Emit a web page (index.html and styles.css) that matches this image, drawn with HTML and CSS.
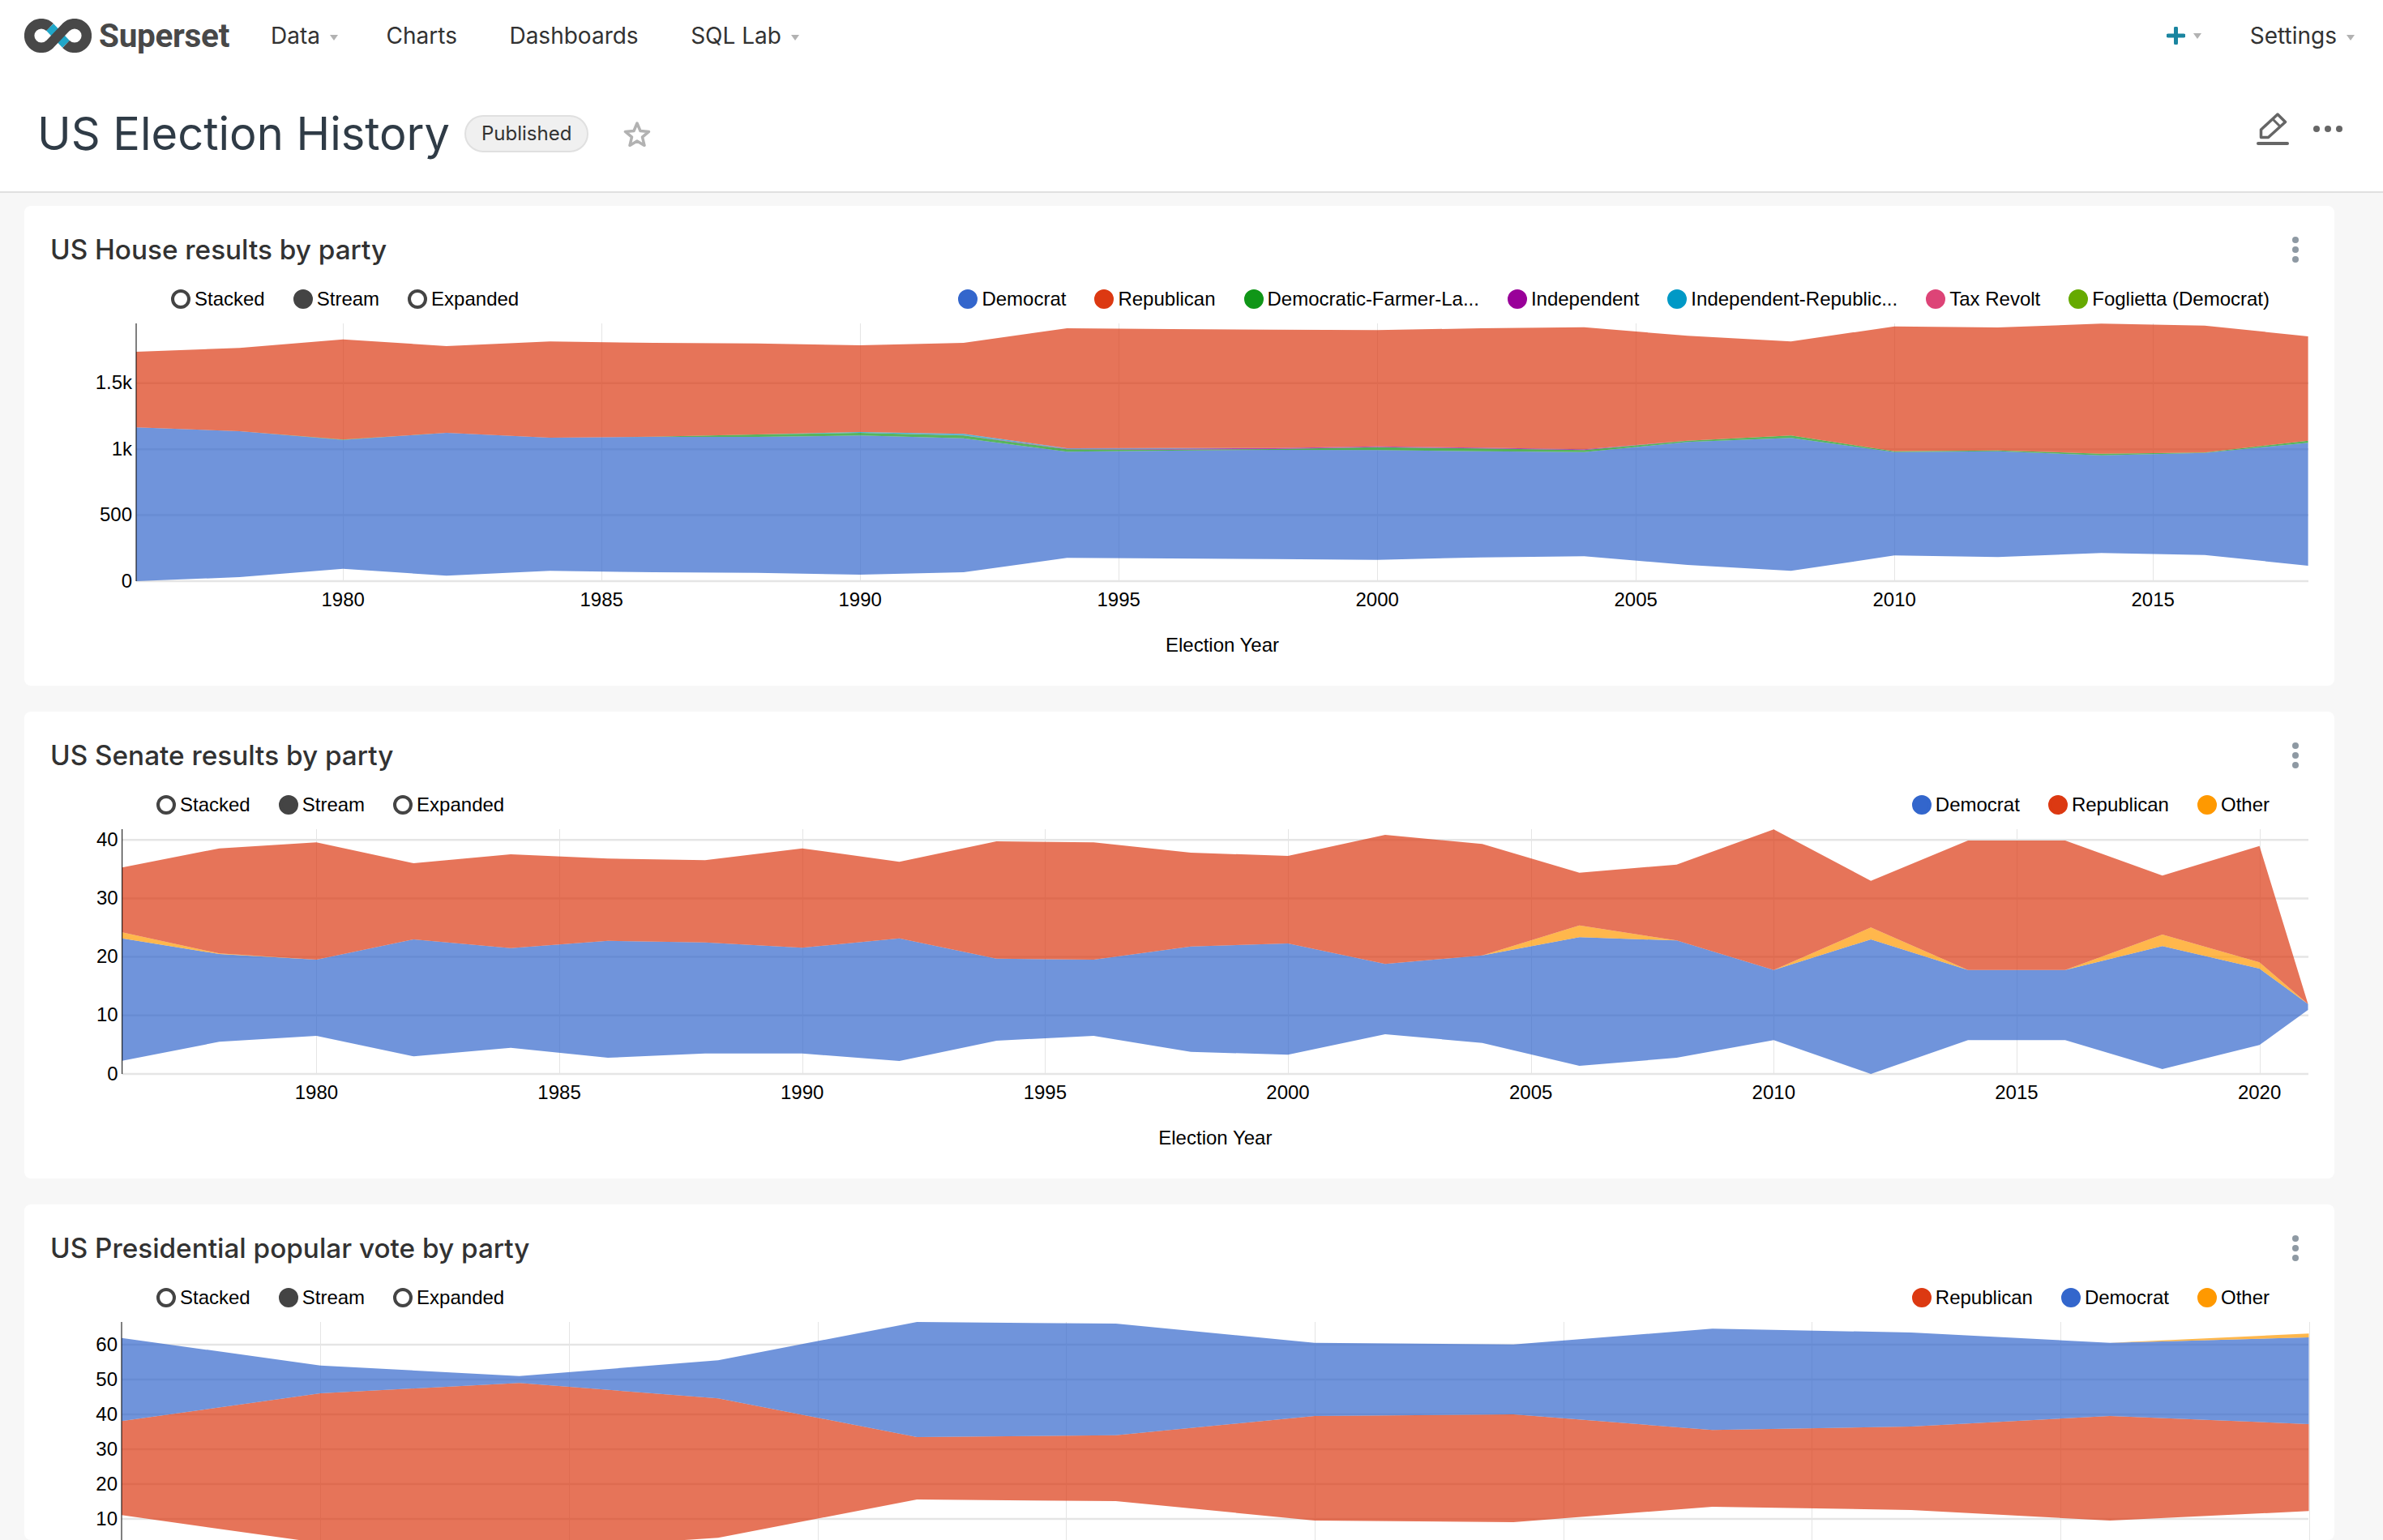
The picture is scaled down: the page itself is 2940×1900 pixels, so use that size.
FILE: index.html
```html
<!DOCTYPE html>
<html lang="en">
<head>
    <meta charset="UTF-8">
    <title>US Election History</title>
    <link rel="stylesheet" href="styles.css">
</head>
<body>
    <!-- Top navigation -->
    <nav class="navbar">
        <a class="brand" href="#">
            <svg class="brand-logo" width="83" height="42" viewBox="0 0 83 42">
                <path d="M31.5 10.5L51.5 31.5" fill="none" stroke="#20a7c9" stroke-width="12.5"/>
                <path d="M31.5 10.5A14.85 14.85 0 1 0 31.5 31.5L51.5 10.5A14.85 14.85 0 1 1 51.5 31.5" fill="none" stroke="#484848" stroke-width="12.5"/>
            </svg>
            <span class="brand-name">Superset</span>
        </a>
        <ul class="nav-links">
            <li>Data<span class="caret"></span></li>
            <li>Charts</li>
            <li>Dashboards</li>
            <li>SQL Lab<span class="caret"></span></li>
        </ul>
        <div class="nav-right">
            <span class="nav-plus">
                <svg width="23" height="22" viewBox="0 0 23 22"><path d="M11.5 2v18M2 11h19" stroke="#1a85a0" stroke-width="5" stroke-linecap="round"/></svg>
                <span class="caret"></span>
            </span>
            <span class="nav-settings">Settings<span class="caret"></span></span>
        </div>
    </nav>

    <!-- Dashboard title -->
    <header class="dash-header">
        <h1 class="dash-title">US Election History</h1>
        <span class="status-label">Published</span>
        <svg class="star" width="34" height="32" viewBox="0 0 34 32"><path d="M17 3l4 9.500 10.500 .9-8 6.800 2.500 10.200-9-5.400-9 5.400 2.500-10.200-8-6.800 10.500-.9z" fill="none" stroke="#b2b2b2" stroke-width="3.500" stroke-linejoin="round"/></svg>
        <div class="dash-actions">
            <svg width="40" height="40" viewBox="0 0 40 40">
                <path d="M26 2l9.500 9.500-21 19h-9v-9.500z" fill="none" stroke="#666" stroke-width="3.500" stroke-linejoin="round"/>
                <path d="M20 8l9 9" stroke="#666" stroke-width="3"/>
                <rect x="0" y="36" width="40" height="4" rx="2" fill="#666"/>
            </svg>
            <span class="dots"><i></i><i></i><i></i></span>
        </div>
    </header>

    <main class="dashboard">
        <section class="card">
            <div class="card-header">
                <h2>US House results by party</h2>
                <span class="kebab"><i></i><i></i><i></i></span>
            </div>
            <div class="legends legends-wide">
                <ul class="legend legend-controls">
                    <li><span class="dot"></span>Stacked</li>
                    <li><span class="dot dot-on"></span>Stream</li>
                    <li><span class="dot"></span>Expanded</li>
                </ul>
                <ul class="legend">
                    <li><span class="dot dot-on c-democrat"></span>Democrat</li>
                    <li><span class="dot dot-on c-republican"></span>Republican</li>
                    <li><span class="dot dot-on c-dfl"></span>Democratic-Farmer-La...</li>
                    <li><span class="dot dot-on c-independent"></span>Independent</li>
                    <li><span class="dot dot-on c-indrep"></span>Independent-Republic...</li>
                    <li><span class="dot dot-on c-tax"></span>Tax Revolt</li>
                    <li><span class="dot dot-on c-foglietta"></span>Foglietta (Democrat)</li>
                </ul>
            </div>
            <svg class="chart" id="chart-house" width="2850" height="462"></svg>
        </section>

        <section class="card">
            <div class="card-header">
                <h2>US Senate results by party</h2>
                <span class="kebab"><i></i><i></i><i></i></span>
            </div>
            <div class="legends">
                <ul class="legend legend-controls">
                    <li><span class="dot"></span>Stacked</li>
                    <li><span class="dot dot-on"></span>Stream</li>
                    <li><span class="dot"></span>Expanded</li>
                </ul>
                <ul class="legend">
                    <li><span class="dot dot-on c-democrat"></span>Democrat</li>
                    <li><span class="dot dot-on c-republican"></span>Republican</li>
                    <li><span class="dot dot-on c-other"></span>Other</li>
                </ul>
            </div>
            <svg class="chart" id="chart-senate" width="2850" height="446"></svg>
        </section>

        <section class="card">
            <div class="card-header">
                <h2>US Presidential popular vote by party</h2>
                <span class="kebab"><i></i><i></i><i></i></span>
            </div>
            <div class="legends">
                <ul class="legend legend-controls">
                    <li><span class="dot"></span>Stacked</li>
                    <li><span class="dot dot-on"></span>Stream</li>
                    <li><span class="dot"></span>Expanded</li>
                </ul>
                <ul class="legend">
                    <li><span class="dot dot-on c-republican"></span>Republican</li>
                    <li><span class="dot dot-on c-democrat"></span>Democrat</li>
                    <li><span class="dot dot-on c-other"></span>Other</li>
                </ul>
            </div>
            <!-- so a altura que cabe na janela -->
            <svg class="chart" id="chart-president" width="2850" height="284"></svg>
        </section>
    </main>

    <script src="charts.js"></script>
</body>
</html>
```

FILE: styles.css
```css
* {
    box-sizing: border-box;
}
html, body {
    margin: 0;
    height: 100%;
    overflow: hidden;
}
body {
    font-family: Inter, "Liberation Sans", sans-serif;
    background-color: #f7f7f7;
    color: #323232;
}
ul {
    list-style: none;
    margin: 0;
    padding: 0;
}

/* Navbar */
.navbar {
    display: flex;
    align-items: center;
    height: 88px;
    padding: 0 35px 0 30px;
    background: white;
    font-size: 28px;
}
.brand {
    display: flex;
    align-items: center;
    gap: 9px;
    text-decoration: none;
}
.brand-name {
    font-family: Roboto, sans-serif;
    font-weight: 700;
    font-size: 40.500px;
    color: #484848;
    letter-spacing: -0.3px;
}
.nav-links {
    display: flex;
    gap: 64.500px;
    margin-left: 51px;
}
.nav-right {
    display: flex;
    align-items: center;
    margin-left: auto;
}
.nav-plus {
    display: flex;
    align-items: center;
    margin-right: 60px;
}
.nav-plus svg {
    margin-right: -2px;
}
.caret {
    display: inline-block;
    width: 0;
    height: 0;
    margin-left: 12px;
    vertical-align: middle;
    border-left: 5px solid transparent;
    border-right: 5px solid transparent;
    border-top: 7px solid #b2b2b2;
}
.nav-links .caret {
    margin-right: -5px;
}

/* Dashboard header */
.dash-header {
    display: flex;
    align-items: center;
    height: 150px;
    padding: 8px 50px 2px 46px;
    background: white;
    border-bottom: 2px solid #e0e0e0;
}
.dash-title {
    margin: 0;
    font-size: 56px;
    font-weight: 400;
    color: #2f3b46;
}
.status-label {
    margin-left: 18px;
    padding: 0 19px;
    height: 46px;
    line-height: 42px;
    font-size: 24px;
    background: #f0f0f0;
    border: 2px solid #e0e0e0;
    border-radius: 23px;
}
.star {
    margin-left: 43px;
}
.dash-actions {
    display: flex;
    align-items: center;
    gap: 30px;
    margin-left: auto;
    margin-bottom: 12px;
}
.dots {
    display: flex;
    gap: 6px;
}
.dots i {
    width: 8px;
    height: 8px;
    border-radius: 50%;
    background: #666;
}

/* Cards */
.dashboard {
    display: flex;
    flex-direction: column;
    gap: 32px;
    padding: 16px 60px 0 30px;
}
.card {
    flex: none;
    background: white;
    border-radius: 8px;
    padding-top: 34px;
}
.card-header {
    display: flex;
    align-items: center;
    justify-content: space-between;
    height: 40px;
    padding: 0 44px 0 32px;
    margin-bottom: 26px;
}
.card-header h2 {
    margin: 0;
    font-size: 33.300px;
    font-weight: 500;
}
.kebab {
    display: flex;
    flex-direction: column;
    gap: 4px;
}
.kebab i {
    width: 8px;
    height: 8px;
    border-radius: 50%;
    background: #8e99a3;
}

/* Legends */
.legends {
    display: flex;
    align-items: center;
    justify-content: space-between;
    height: 30px;
    padding: 0 80px 0 163px;
    font-family: "Liberation Sans", Arial, sans-serif;
    font-size: 24px;
    color: black;
}
.legends-wide {
    padding-left: 181px;
}
.legend {
    display: flex;
    gap: 35px;
}
.legend li {
    display: flex;
    align-items: center;
    gap: 5px;
    white-space: nowrap;
}
.dot {
    width: 24px;
    height: 24px;
    border-radius: 50%;
    border: 4px solid #444;
}
.dot-on {
    background: #444;
}
.c-democrat { background: #3366cc; border-color: #3366cc; }
.c-republican { background: #dc3912; border-color: #dc3912; }
.c-dfl { background: #109618; border-color: #109618; }
.c-independent { background: #990099; border-color: #990099; }
.c-indrep { background: #0099c6; border-color: #0099c6; }
.c-tax { background: #dd4477; border-color: #dd4477; }
.c-foglietta { background: #66aa00; border-color: #66aa00; }
.c-other { background: #ff9900; border-color: #ff9900; }

/* Charts */
.chart {
    display: block;
}
.chart text {
    font-family: "Liberation Sans", Arial, sans-serif;
    font-size: 24px;
    fill: black;
}
.grid-h {
    stroke: #e5e5e5;
    stroke-width: 2.500;
}
.grid-v {
    stroke: #e5e5e5;
    stroke-width: 1;
}
.axis {
    stroke: #000;
    stroke-width: 1;
}
.area {
    fill-opacity: 0.7;
}
```

FILE: charts.js
```js
// Colores das series
const BLUE = '#3366cc', RED = '#dc3912', GREEN = '#109618', PURPLE = '#990099', TEAL = '#0099c6', ORANGE = '#ff9900';

const years2 = (from, to) => {
    const out = [];
    for (let y = from; y <= to; y += 2) out.push(y);
    return out;
};

// Stacks: each row is the height of a boundary above the baseline (px). Bands fill between rows.
const houseBottom = [0, 5, 15.3, 6.7, 12.7, 11, 10.3, 8, 11, 28.7, 28, 27.3, 26.3, 29.3, 30.7, 20, 12.7, 31.7, 29.7, 34.7, 32.3, 19];
const houseDem = [189.7, 185, 174.3, 183, 177, 178, 178, 179.7, 176.3, 159.7, 161, 162, 161.7, 160.3, 159.3, 171.7, 176.7, 159.3, 160.3, 155.3, 158.3, 170.7];
const houseGreen = [189.7, 185, 174.7, 183, 177, 178.3, 181, 183, 179.7, 162.7, 162.3, 163, 165.3, 163.7, 161.7, 173.3, 179.7, 160.3, 161.3, 157.3, 158.7, 173.3];
const housePurple = [189.7, 185, 174.7, 183, 177, 178.3, 181, 183, 180, 163.5, 163.5, 164.3, 166.3, 164.7, 162.7, 173.3, 179.7, 160.3, 161.3, 157.3, 158.7, 173.3];
const houseTeal = [189.7, 185, 174.7, 183, 177, 178.3, 181, 184, 181.7, 164, 164.3, 164.3, 166.3, 164.7, 162.7, 173.3, 179.7, 160.3, 161.3, 157.3, 158.7, 173.3];
const houseRep = [283, 287.7, 298.3, 290, 295.7, 294, 293.3, 291, 294, 312, 311, 310.3, 309.7, 312, 313.3, 302.7, 295.7, 314.3, 313, 317.7, 315.3, 302];

const senateBottom = [16.3, 39.7, 47, 21.7, 32.3, 20, 25.3, 25.3, 16, 41, 47, 27.3, 23.7, 49, 38.3, 10, 20, 41.7, 0, 41.7, 41.7, 6, 35.7, 79];
const senateDem = [167.3, 148, 141, 166, 155.3, 164.3, 162.3, 155.7, 167.3, 142.3, 141, 157.3, 161, 135.7, 146.3, 168.7, 164.7, 128.3, 166, 128.3, 128.3, 157.7, 130, 86.3];
const senateOther = [174.7, 148.7, 141, 166, 155.3, 164.3, 162.3, 155.7, 167.3, 142.3, 141, 157.3, 161, 135.7, 146.3, 183.3, 164.7, 128.3, 180.7, 128.3, 128.3, 172, 137.7, 86.3];
const senateRep = [254.7, 278.3, 285.7, 260, 271, 265.7, 263.7, 278.3, 261.7, 287, 285.7, 273, 269, 295, 283.7, 248.3, 258.3, 301.7, 238.3, 288, 288, 244.7, 281.3, 86.3];

const presBottom = [47.7, 13.3, 3.7, 19.7, 67, 65, 41, 39, 58, 54, 41, 52.7];
const presRep = [163.7, 198, 210.7, 191.7, 144, 146.3, 170, 172, 152.7, 157, 170, 160];
const presDem = [266.3, 232.3, 219.3, 238.7, 286, 284, 260.3, 258.3, 277.7, 273, 260.3, 267];
const presOther = [266.3, 232.3, 219.3, 238.7, 286, 284, 260.3, 258.3, 277.7, 273, 260.3, 271.7];

const charts = [
    {
        id: 'chart-house', axisX: 138, pxPerYear: 63.8, base: 333, step: 81.4,
        yLabels: ['0', '500', '1k', '1.5k'],
        years: years2(1976, 2018), lastTick: 2015,
        stack: [houseBottom, houseDem, houseGreen, housePurple, houseTeal, houseRep],
        colors: [BLUE, GREEN, PURPLE, TEAL, RED]
    },
    {
        id: 'chart-senate', axisX: 120.7, pxPerYear: 59.93, base: 317, step: 72.2,
        yLabels: ['0', '10', '20', '30', '40'],
        years: years2(1976, 2020).concat(2021), lastTick: 2020,
        stack: [senateBottom, senateDem, senateOther, senateRep],
        colors: [BLUE, ORANGE, RED]
    },
    {
        id: 'chart-president', axisX: 120, pxPerYear: 61.33, base: 301, step: 43,
        yLabels: ['0', '10', '20', '30', '40', '50', '60'],
        years: [1976, 1980, 1984, 1988, 1992, 1996, 2000, 2004, 2008, 2012, 2016, 2020], lastTick: 2020,
        stack: [presBottom, presRep, presDem, presOther],
        colors: [RED, BLUE, ORANGE]
    }
];

const PLOT_TOP = 15;
const PLOT_RIGHT = 2818;

function drawChart(c) {
    const svg = document.getElementById(c.id);
    const height = Number(svg.getAttribute('height'));
    const xOf = (year) => c.axisX + (year - 1976) * c.pxPerYear;
    let html = '';

    // Textos abaixo da altura do svg nao sao desenhados
    const label = (x, y, anchor, text) => {
        if (y < height) html += `<text x="${x}" y="${y}" text-anchor="${anchor}">${text}</text>`;
    };

    // Grid horizontal e labels do eixo Y
    c.yLabels.forEach((text, i) => {
        const y = c.base - i * c.step;
        html += `<line class="grid-h" x1="${c.axisX}" x2="${PLOT_RIGHT}" y1="${y}" y2="${y}"/>`;
        label(c.axisX - 5, y + 7.5, 'end', text);
    });

    // Grid vertical e labels do eixo X
    for (let year = 1980; year <= c.lastTick; year += 5) {
        const x = xOf(year);
        const lineX = Math.round(x) + 0.5;
        html += `<line class="grid-v" x1="${lineX}" x2="${lineX}" y1="${PLOT_TOP}" y2="${c.base}"/>`;
        label(x, c.base + 30.5, 'middle', year);
    }

    // Areas
    c.colors.forEach((color, i) => {
        const lower = c.stack[i], upper = c.stack[i + 1];
        const top = upper.map((h, k) => `${xOf(c.years[k]).toFixed(1)},${(c.base - h).toFixed(1)}`);
        const bottom = lower.map((h, k) => `${xOf(c.years[k]).toFixed(1)},${(c.base - h).toFixed(1)}`).reverse();
        html += `<polygon class="area" fill="${color}" points="${top.concat(bottom).join(' ')}"/>`;
    });

    html += `<line class="axis" x1="${c.axisX}" x2="${c.axisX}" y1="${PLOT_TOP}" y2="${c.base}"/>`;
    label((c.axisX + PLOT_RIGHT) / 2, c.base + 87, 'middle', 'Election Year');
    svg.innerHTML = html;
}

charts.forEach(drawChart);
```
